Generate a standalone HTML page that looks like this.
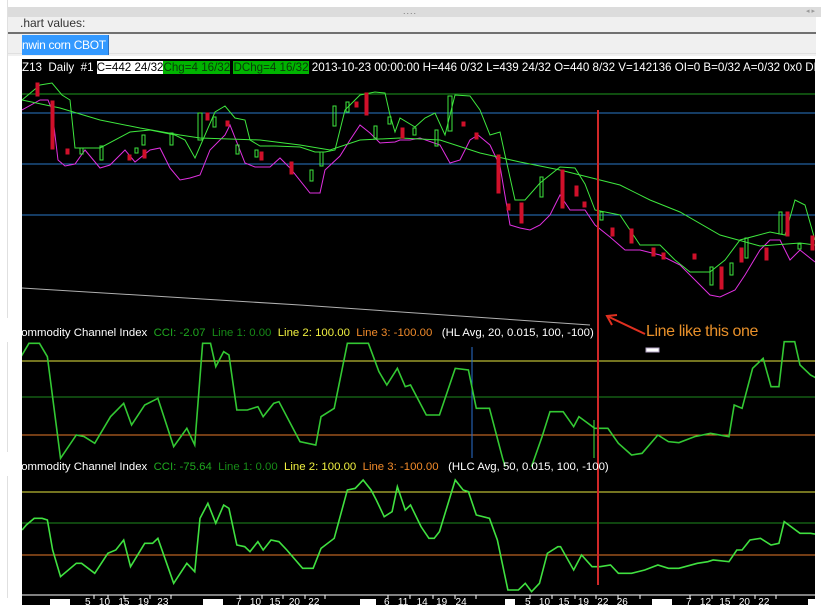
<!DOCTYPE html>
<html><head><meta charset="utf-8"><style>
html,body{margin:0;padding:0;width:821px;height:605px;overflow:hidden;background:#fff;font-family:"Liberation Sans",sans-serif;}
.abs{position:absolute}
</style></head><body>
<div class="abs" style="left:0;top:0;width:821px;height:605px;background:#fff"></div>
<div class="abs" style="left:7px;top:7px;width:814px;height:10px;background:#dcdcdc"></div>
<div class="abs" style="left:403px;top:7px;font-size:9px;color:#777;letter-spacing:1px;line-height:8px">....</div>
<div class="abs" style="left:806px;top:7px;font-size:7px;color:#999;line-height:10px">◂ ▸</div>
<div class="abs" style="left:7px;top:17px;width:809px;height:16px;background:#f0f0f0"></div>
<div class="abs" style="left:20px;top:16px;font-size:12px;color:#333;line-height:14px">.hart values:</div>
<div class="abs" style="left:7px;top:32px;width:809px;height:2px;background:#707070"></div>
<div class="abs" style="left:7px;top:34px;width:809px;height:22px;background:#f0f0f0"></div>
<div class="abs" style="left:7px;top:53px;width:809px;height:1px;background:#e0e0e0"></div>
<div class="abs" style="left:7px;top:0;width:1px;height:605px;background:#e0e0e0"></div>
<div class="abs" style="left:22px;top:35px;width:86px;height:20px;background:#3399ff;border-right:1px solid #2a6fc0"></div>
<div class="abs" style="left:22px;top:37px;font-size:12px;letter-spacing:-0.3px;color:#fff;line-height:16px">nwin corn CBOT</div>
<div class="abs" style="left:22px;top:59px;width:793px;height:546px;background:#000"></div>

<div class="abs" style="left:22px;top:60px;width:793px;overflow:hidden;height:15px;font-size:11.6px;line-height:15px;white-space:nowrap;color:#fff">Z13&nbsp; Daily&nbsp; #1 <span style="background:#fff;color:#000">C=442 24/32</span><span style="background:#00b400;color:#0a3a0a">Chg=4 16/32</span> <span style="background:#00b400;color:#0a3a0a">DChg=4 16/32</span> 2013-10-23 00:00:00 H=446 0/32 L=439 24/32 O=440 8/32 V=142136 OI=0 B=0/32 A=0/32 0x0 DR</div>

<svg class="abs" style="left:0;top:0" width="821" height="605" viewBox="0 0 821 605">
<defs><clipPath id="c"><rect x="22" y="76" width="793" height="520"/></clipPath></defs>
<g clip-path="url(#c)" fill="none">
<line x1="22" y1="94" x2="815" y2="94" stroke="#1e9a1e"/>
<line x1="22" y1="113" x2="815" y2="113" stroke="#2a78c8"/>
<line x1="22" y1="164" x2="815" y2="164" stroke="#2a78c8"/>
<line x1="22" y1="215" x2="815" y2="215" stroke="#2a78c8"/>
<polyline stroke="#b0b0b0" points="22,288 300,305 590,325"/>
<polyline stroke="#3ee63e" points="22,100 40,85 52,83 62,95 70,100 75,148 100,148 130,132 150,130 165,133 175,135 185,140 195,158 215,112 225,106 235,118 245,120 250,140 260,146 275,146 300,147 315,152 325,152 335,150 345,110 360,95 375,92 385,93 390,115 395,132 400,118 415,127 425,118 435,113 445,135 455,95 470,96 480,110 490,135 500,132 505,155 515,200 525,200 540,183 560,167 575,168 585,184 595,210 620,215 640,245 660,245 675,260 690,272 710,272 725,260 740,240 755,236 770,232 785,235 795,200 805,205 815,240"/>
<polyline stroke="#e030e0" points="22,110 40,100 48,100 52,110 58,160 65,166 75,164 85,150 100,168 110,165 125,150 135,162 150,150 160,148 170,168 180,180 190,178 200,175 210,150 225,135 230,125 245,163 255,167 270,167 280,158 290,168 310,193 320,193 325,170 340,156 350,140 360,125 370,133 380,143 395,142 400,140 410,140 420,138 440,145 450,163 460,160 470,140 478,135 490,145 500,166 510,225 520,228 530,230 540,225 550,215 560,195 570,210 585,210 595,225 610,237 625,250 640,250 660,255 680,265 695,280 710,295 720,297 735,290 745,275 760,250 770,240 780,240 790,260 800,250 815,262"/>
<polyline stroke="#3ee63e" points="22,100 60,108 100,120 140,128 180,135 200,138 260,140 300,145 330,150 360,140 400,138 440,140 480,153 520,162 560,170 600,180 620,185 650,200 680,212 720,235 760,246 800,243 815,245"/>
<g stroke-width="1">
<rect x="36" y="83" width="3" height="13" fill="#d0102a" stroke="#d0102a"/>
<rect x="51" y="101" width="3" height="48" fill="#d0102a" stroke="#d0102a"/>
<rect x="66" y="149" width="3" height="5" fill="#d0102a" stroke="#d0102a"/>
<rect x="80" y="148" width="3" height="6" stroke="#3ee63e"/>
<rect x="100" y="146" width="3" height="14" stroke="#3ee63e"/>
<rect x="128" y="155" width="3" height="5" fill="#d0102a" stroke="#d0102a"/>
<rect x="135" y="148" width="3" height="5" stroke="#3ee63e"/>
<rect x="143" y="150" width="3" height="8" fill="#d0102a" stroke="#d0102a"/>
<rect x="142" y="135" width="3" height="10" stroke="#3ee63e"/>
<rect x="170" y="133" width="3" height="12" stroke="#3ee63e"/>
<rect x="198" y="113" width="4" height="27" stroke="#3ee63e"/>
<rect x="206" y="113" width="3" height="7" fill="#d0102a" stroke="#d0102a"/>
<rect x="213" y="117" width="3" height="10" stroke="#3ee63e"/>
<rect x="226" y="121" width="3" height="5" fill="#d0102a" stroke="#d0102a"/>
<rect x="236" y="145" width="3" height="9" stroke="#3ee63e"/>
<rect x="255" y="150" width="3" height="7" stroke="#3ee63e"/>
<rect x="260" y="152" width="3" height="8" fill="#d0102a" stroke="#d0102a"/>
<rect x="290" y="162" width="3" height="12" fill="#d0102a" stroke="#d0102a"/>
<rect x="310" y="170" width="3" height="11" stroke="#3ee63e"/>
<rect x="320" y="152" width="3" height="14" stroke="#3ee63e"/>
<rect x="333" y="106" width="3" height="20" stroke="#3ee63e"/>
<rect x="346" y="102" width="3" height="10" stroke="#3ee63e"/>
<rect x="355" y="102" width="3" height="5" fill="#d0102a" stroke="#d0102a"/>
<rect x="365" y="93" width="3" height="22" fill="#d0102a" stroke="#d0102a"/>
<rect x="374" y="126" width="3" height="12" stroke="#3ee63e"/>
<rect x="388" y="117" width="3" height="7" stroke="#3ee63e"/>
<rect x="401" y="128" width="3" height="10" fill="#d0102a" stroke="#d0102a"/>
<rect x="413" y="128" width="3" height="7" stroke="#3ee63e"/>
<rect x="435" y="130" width="3" height="16" stroke="#3ee63e"/>
<rect x="448" y="96" width="4" height="35" stroke="#3ee63e"/>
<rect x="462" y="122" width="3" height="4" fill="#d0102a" stroke="#d0102a"/>
<rect x="475" y="133" width="3" height="6" fill="#d0102a" stroke="#d0102a"/>
<rect x="497" y="155" width="3" height="38" fill="#d0102a" stroke="#d0102a"/>
<rect x="507" y="204" width="3" height="6" fill="#d0102a" stroke="#d0102a"/>
<rect x="520" y="203" width="3" height="20" fill="#d0102a" stroke="#d0102a"/>
<rect x="540" y="177" width="3" height="20" stroke="#3ee63e"/>
<rect x="561" y="170" width="3" height="38" fill="#d0102a" stroke="#d0102a"/>
<rect x="575" y="186" width="3" height="10" fill="#d0102a" stroke="#d0102a"/>
<rect x="583" y="202" width="3" height="5" fill="#d0102a" stroke="#d0102a"/>
<rect x="600" y="212" width="3" height="8" stroke="#3ee63e"/>
<rect x="611" y="228" width="3" height="8" fill="#d0102a" stroke="#d0102a"/>
<rect x="630" y="229" width="3" height="14" fill="#d0102a" stroke="#d0102a"/>
<rect x="652" y="248" width="3" height="8" fill="#d0102a" stroke="#d0102a"/>
<rect x="662" y="253" width="3" height="6" fill="#d0102a" stroke="#d0102a"/>
<rect x="693" y="254" width="3" height="5" fill="#d0102a" stroke="#d0102a"/>
<rect x="710" y="267" width="3" height="18" stroke="#3ee63e"/>
<rect x="720" y="267" width="3" height="22" fill="#d0102a" stroke="#d0102a"/>
<rect x="730" y="263" width="3" height="12" stroke="#3ee63e"/>
<rect x="740" y="248" width="3" height="14" fill="#d0102a" stroke="#d0102a"/>
<rect x="745" y="238" width="3" height="20" stroke="#3ee63e"/>
<rect x="765" y="248" width="3" height="12" fill="#d0102a" stroke="#d0102a"/>
<rect x="779" y="212" width="3" height="22" stroke="#3ee63e"/>
<rect x="786" y="212" width="3" height="24" fill="#d0102a" stroke="#d0102a"/>
<rect x="798" y="244" width="3" height="5" stroke="#3ee63e"/>
<rect x="811" y="236" width="3" height="14" fill="#d0102a" stroke="#d0102a"/>
</g>
<line x1="22" y1="361" x2="815" y2="361" stroke="#e8e840"/>
<line x1="22" y1="397" x2="815" y2="397" stroke="#1e8a1e"/>
<line x1="22" y1="435" x2="815" y2="435" stroke="#e87a2a"/>
<line x1="472" y1="347" x2="472" y2="458" stroke="#2a6fd0"/>
<line x1="594" y1="420" x2="594" y2="458" stroke="#3ee63e"/>
<g transform="translate(0,310) scale(0.5263,0.3333)">
<polyline vector-effect="non-scaling-stroke" stroke-width="1.6" stroke="#33c833" points="40,140 55,100 75,100 90,140 115,445 145,375 160,380 180,400 210,320 235,280 250,345 275,285 300,265 330,410 355,355 370,405 385,100 400,100 410,170 425,125 435,135 450,300 470,300 490,290 500,320 520,280 530,275 570,395 600,405 610,320 635,295 660,100 700,100 720,185 735,225 755,175 770,230 780,225 810,315 835,315 865,175 890,180 905,295 930,295 955,445 960,470"/>
<polyline vector-effect="non-scaling-stroke" stroke-width="1.6" stroke="#33c833" points="1010,470 1030,380 1045,305 1070,305 1090,350 1100,320 1130,355 1155,355 1175,400 1200,435 1220,430 1250,375 1270,395 1290,398 1320,380 1350,370 1385,380 1395,285 1410,295 1430,175 1450,145 1465,230 1480,230 1490,95 1510,95 1520,165 1540,195 1558,210"/>
</g>
<line x1="22" y1="492" x2="815" y2="492" stroke="#e8e840"/>
<line x1="22" y1="523" x2="815" y2="523" stroke="#1e8a1e"/>
<line x1="22" y1="555" x2="815" y2="555" stroke="#e87a2a"/>
<g transform="translate(0,470) scale(0.5263,0.3333)">
<polyline vector-effect="non-scaling-stroke" stroke-width="1.6" stroke="#40e040" points="42,180 50,165 65,145 80,145 90,150 100,240 115,320 145,280 155,280 180,310 205,250 220,240 235,210 248,290 275,220 290,220 300,205 330,340 355,280 370,305 380,145 395,100 410,160 425,105 435,115 450,225 465,230 475,245 490,215 500,240 515,210 530,215 545,240 575,295 595,295 610,235 635,205 660,60 675,55 690,30 705,60 715,90 730,140 745,125 755,50 770,120 780,105 800,170 815,205 825,205 835,185 865,30 880,60 890,65 905,135 930,145 945,210 965,360 985,360 998,340 1010,365 1025,340 1040,250 1060,230 1065,230 1090,300 1105,255 1125,290 1140,290 1160,285 1175,310 1200,310 1225,300 1250,285 1270,295 1290,295 1325,280 1345,275 1355,270 1385,275 1400,240 1410,240 1425,210 1445,205 1465,225 1480,220 1490,155 1520,190 1540,190 1558,195"/>
</g>
<line x1="598" y1="110" x2="598" y2="585" stroke="#d02828" stroke-width="2"/>
<line x1="22" y1="595" x2="815" y2="595" stroke="#ffffff"/>
</g>
<polyline fill="none" stroke="#e03020" stroke-width="2" points="645,334 607,316"/>
<polyline fill="none" stroke="#e03020" stroke-width="2" points="617,315 607,316 612,325"/>
<rect x="646" y="348" width="13" height="4" fill="#fff" stroke="#b0a0c0"/>
<g stroke="#fff">
<line x1="94" y1="595" x2="94" y2="599"/><line x1="108" y1="595" x2="108" y2="599"/><line x1="124" y1="595" x2="124" y2="599"/><line x1="150" y1="595" x2="150" y2="599"/><line x1="171" y1="595" x2="171" y2="599"/><line x1="240" y1="595" x2="240" y2="599"/><line x1="262" y1="595" x2="262" y2="599"/><line x1="283" y1="595" x2="283" y2="599"/><line x1="305" y1="595" x2="305" y2="599"/><line x1="325" y1="595" x2="325" y2="599"/><line x1="388" y1="595" x2="388" y2="599"/><line x1="410" y1="595" x2="410" y2="599"/><line x1="433" y1="595" x2="433" y2="599"/><line x1="455" y1="595" x2="455" y2="599"/><line x1="476" y1="595" x2="476" y2="599"/><line x1="530" y1="595" x2="530" y2="599"/><line x1="552" y1="595" x2="552" y2="599"/><line x1="575" y1="595" x2="575" y2="599"/><line x1="596" y1="595" x2="596" y2="599"/><line x1="618" y1="595" x2="618" y2="599"/><line x1="640" y1="595" x2="640" y2="599"/><line x1="690" y1="595" x2="690" y2="599"/><line x1="712" y1="595" x2="712" y2="599"/><line x1="734" y1="595" x2="734" y2="599"/><line x1="755" y1="595" x2="755" y2="599"/><line x1="776" y1="595" x2="776" y2="599"/>
</g>
<g fill="#fff"><rect x="50" y="599" width="20" height="8"/><rect x="203" y="599" width="20" height="8"/><rect x="360" y="599" width="16" height="8"/><rect x="505" y="599" width="10" height="8"/><rect x="652" y="599" width="20" height="8"/><rect x="808" y="599" width="7" height="8"/></g>
</svg>

<div class="abs" style="left:13px;top:326px;font-size:11.4px;line-height:15px;white-space:nowrap;color:#fff">Commodity Channel Index&nbsp; <span style="color:#1fa81f">CCI: -2.07</span>&nbsp; <span style="color:#178a17">Line 1: 0.00</span>&nbsp; <span style="color:#f0f040">Line 2: 100.00</span>&nbsp; <span style="color:#f08a2a">Line 3: -100.00</span>&nbsp;&nbsp; (HL Avg, 20, 0.015, 100, -100)</div>
<div class="abs" style="left:13px;top:460px;font-size:11.4px;line-height:15px;white-space:nowrap;color:#fff">Commodity Channel Index&nbsp; <span style="color:#1fa81f">CCI: -75.64</span>&nbsp; <span style="color:#178a17">Line 1: 0.00</span>&nbsp; <span style="color:#f0f040">Line 2: 100.00</span>&nbsp; <span style="color:#f08a2a">Line 3: -100.00</span>&nbsp;&nbsp; (HLC Avg, 50, 0.015, 100, -100)</div>
<div class="abs" style="left:0;top:318px;width:20px;height:24px;background:#fff"></div>
<div class="abs" style="left:0;top:452px;width:20px;height:24px;background:#fff"></div>
<div class="abs" style="left:646px;top:322px;font-size:16px;line-height:20px;letter-spacing:-0.4px;color:#e8902a;white-space:nowrap">Line like this one</div>
<div class="abs" style="left:85px;top:598px;font-size:10px;line-height:10px;color:#fff;white-space:pre">5   10   15   19   23</div>
<div class="abs" style="left:236px;top:598px;font-size:10px;line-height:10px;color:#fff;white-space:pre">7   10   15   20   22</div>
<div class="abs" style="left:384px;top:598px;font-size:10px;line-height:10px;color:#fff;white-space:pre">6   11   14   19   24</div>
<div class="abs" style="left:525px;top:598px;font-size:10px;line-height:10px;color:#fff;white-space:pre">5   10   15   19   22   26</div>
<div class="abs" style="left:686px;top:598px;font-size:10px;line-height:10px;color:#fff;white-space:pre">7   12   15   20   22</div>
<div class="abs" style="left:0;top:598px;width:22px;height:7px;background:#fff"></div>
</body></html>
